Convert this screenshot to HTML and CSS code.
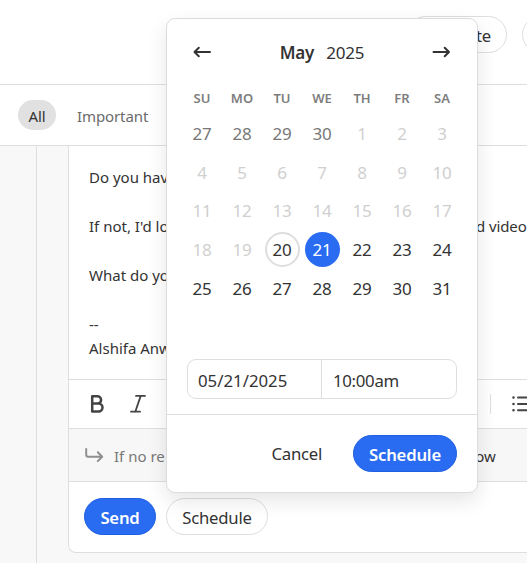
FILE: index.html
```html
<!DOCTYPE html>
<html lang="en">
<head>
  <meta charset="UTF-8">
  <meta name="viewport" content="width=device-width, initial-scale=1.0">
  <title>Schedule</title>
  <link rel="stylesheet" href="styles.css">
</head>
<body>
  <header class="header">
    <button class="btn header-btn">Create</button>
    <button class="btn header-more"></button>
  </header>

  <nav class="tabs">
    <span class="tab tab-active">All</span>
    <span class="tab">Important</span>
  </nav>

  <main class="main">
    <aside class="sidebar"></aside>
    <section class="composer">
      <div class="message">
        <p>Do you have</p>
        <p class="split"><span>If not, I'd lo</span><span>d video</span></p>
        <p>What do yo</p>
        <p class="signature">--<br>Alshifa Anw</p>
      </div>

      <div class="toolbar">
        <svg class="icon-bold" width="16" height="20" viewBox="0 0 16 20">
          <path d="M3.2 2.2h5.2a3.7 3.7 0 0 1 0 7.4H3.2zM3.2 9.6h6.4a3.9 3.9 0 0 1 0 7.8H3.2z"/>
        </svg>
        <svg class="icon-italic" width="16" height="20" viewBox="0 0 16 20">
          <path d="M6 1.9h9M1 17.7h9M10.7 1.9L5.3 17.7"/>
        </svg>
        <span class="toolbar-divider"></span>
        <svg class="icon-list" width="15" height="18" viewBox="0 0 15 18">
          <path d="M6 2.5h14M6 9h14M6 15.3h14"/>
          <path class="dots" d="M1.5 2.5h.01M1.5 9h.01M1.5 15.3h.01"/>
        </svg>
      </div>

      <div class="reminder">
        <svg width="19" height="15" viewBox="0 0 19 15">
          <path d="M1.2 1v5.7a2 2 0 0 0 2 2h14M12.8 4.3l4.4 4.4-4.4 4.4"/>
        </svg>
        <span class="reminder-text">If no re</span>
        <span class="reminder-when">now</span>
      </div>

      <div class="actions">
        <button class="btn btn-primary send">Send</button>
        <button class="btn schedule">Schedule</button>
      </div>
    </section>
  </main>

  <div class="picker">
    <div class="picker-head">
      <svg width="20" height="14" viewBox="0 0 20 14">
        <path d="M18 7H2.5M6.8 2.7L2.5 7l4.3 4.3"/>
      </svg>
      <div class="picker-title"><strong>May</strong><span>2025</span></div>
      <svg width="20" height="14" viewBox="0 0 20 14">
        <path d="M1.5 7H17M12.7 2.7L17 7l-4.3 4.3"/>
      </svg>
    </div>

    <div class="weekdays">
      <span>SU</span><span>MO</span><span>TU</span><span>WE</span><span>TH</span><span>FR</span><span>SA</span>
    </div>

    <div class="days">
      <span class="prev">27</span><span class="prev">28</span><span class="prev">29</span><span class="prev">30</span><span class="off">1</span><span class="off">2</span><span class="off">3</span>
      <span class="off">4</span><span class="off">5</span><span class="off">6</span><span class="off">7</span><span class="off">8</span><span class="off">9</span><span class="off">10</span>
      <span class="off">11</span><span class="off">12</span><span class="off">13</span><span class="off">14</span><span class="off">15</span><span class="off">16</span><span class="off">17</span>
      <span class="off">18</span><span class="off">19</span><span class="today">20</span><span class="selected">21</span><span>22</span><span>23</span><span>24</span>
      <span>25</span><span>26</span><span>27</span><span>28</span><span>29</span><span>30</span><span>31</span>
    </div>

    <div class="fields">
      <div class="field">05/21/2025</div>
      <div class="field">10:00am</div>
    </div>

    <div class="picker-foot">
      <button class="cancel">Cancel</button>
      <button class="btn btn-primary confirm">Schedule</button>
    </div>
  </div>
</body>
</html>
```
FILE: styles.css
```css
* {
  box-sizing: border-box;
}

body {
  margin: 0;
  height: 563px;
  display: flex;
  flex-direction: column;
  position: relative;
  overflow: hidden;
  background: #fff;
  color: #333;
  font-family: "Noto Sans", "Open Sans", sans-serif;
  font-size: 15px;
}

svg {
  flex: none;
  fill: none;
  stroke: #333;
  stroke-width: 2;
  stroke-linecap: round;
  stroke-linejoin: round;
}

button {
  font-family: inherit;
  color: inherit;
  padding: 0;
  border: none;
  background: none;
}

.btn {
  flex: none;
  height: 37px;
  border: 1px solid #dedede;
  border-radius: 19px;
  background: #fff;
  font-size: 16.7px;
  line-height: 37px;
  letter-spacing: -0.2px;
}

.btn-primary {
  background: #296cf2;
  border-color: #1f5fe0;
  color: #fff;
  font-weight: 600;
}

.header {
  height: 85px;
  flex: none;
  display: flex;
  gap: 15px;
  padding: 16px 0 0 407px;
  border-bottom: 1px solid #dedede;
  overflow: hidden;
}

.header-btn {
  width: 100px;
  padding-right: 15px;
  text-align: right;
}

.header-more {
  width: 60px;
}

.tabs {
  height: 61px;
  flex: none;
  display: flex;
  align-items: flex-start;
  gap: 5px;
  padding: 15px 0 0 18px;
  border-bottom: 1px solid #dedede;
}

.tab {
  height: 30px;
  padding: 0 16px;
  line-height: 32px;
  color: #6b6b6b;
  letter-spacing: -0.1px;
}

.tab-active {
  width: 38px;
  padding: 0;
  text-align: center;
  border-radius: 15px;
  background: #e1e1e1;
  color: #333;
}

.main {
  flex: 1;
  display: flex;
  background: #f8f8f8;
}

.sidebar {
  width: 37px;
  flex: none;
  border-right: 1px solid #dedede;
}

.composer {
  flex: 1;
  min-width: 0;
  height: 407px;
  margin-left: 31px;
  display: flex;
  flex-direction: column;
  border: 1px solid #dedede;
  border-width: 0 0 1px 1px;
  border-radius: 0 0 0 8px;
  background: #fff;
}

.message {
  height: 234px;
  flex: none;
  padding: 19px 0 0 20px;
  border-bottom: 1px solid #dedede;
  line-height: 24.4px;
  white-space: nowrap;
}

.message p {
  margin: 0 0 24.5px;
}

.split {
  display: flex;
}

.split span:first-child {
  width: 387px;
}

.split span:last-child {
  letter-spacing: -0.1px;
}

.toolbar {
  height: 49px;
  flex: none;
  display: flex;
  align-items: center;
  padding-left: 20px;
  border-bottom: 1px solid #dedede;
}

.toolbar svg {
  stroke: #444;
}

.toolbar .icon-bold {
  stroke-width: 2.5;
}

.toolbar .icon-italic {
  margin-left: 25px;
  stroke-width: 1.8;
}

.toolbar-divider {
  width: 1px;
  height: 20px;
  margin-left: 344px;
  background: #dedede;
}

.icon-list {
  margin-left: 21px;
}

.icon-list .dots {
  stroke-width: 2.6;
}

.reminder {
  height: 53px;
  flex: none;
  display: flex;
  align-items: center;
  padding: 1px 0 0 16px;
  border-bottom: 1px solid #dedede;
  background: #f7f7f7;
}

.reminder svg {
  stroke: #8f8f8f;
}

.reminder-text {
  width: 352px;
  margin-left: 10px;
  color: #777;
}

.actions {
  display: flex;
  gap: 10px;
  padding: 16px 0 0 15px;
}

.send {
  width: 72px;
}

.schedule {
  width: 102px;
}

/* date picker popup */
.picker {
  position: absolute;
  left: 166px;
  top: 18px;
  width: 312px;
  height: 475px;
  display: flex;
  flex-direction: column;
  border: 1px solid #dcdcdc;
  border-radius: 9px;
  background: #fff;
  box-shadow: 0 8px 20px rgba(0, 0, 0, 0.1);
}

.picker-head {
  display: flex;
  align-items: center;
  justify-content: space-between;
  height: 24px;
  margin: 21px 25px 0;
}

.picker-title {
  display: flex;
  gap: 12px;
  font-size: 17px;
  letter-spacing: -0.2px;
}

.picker-title strong {
  font-weight: 600;
}

.weekdays,
.days {
  display: grid;
  grid-template-columns: repeat(7, 40px);
  justify-items: center;
  margin-left: 15px;
}

.weekdays {
  margin-top: 25px;
  font-size: 13px;
  line-height: 18px;
  font-weight: 600;
  color: #7d7d7d;
}

.days {
  grid-auto-rows: 38.8px;
  align-items: center;
  margin-top: 7px;
  font-size: 17px;
}

.days span {
  width: 35px;
  height: 35px;
  line-height: 35px;
  text-align: center;
  letter-spacing: -0.3px;
}

.days .prev {
  color: #777;
}

.days .off {
  color: #cfcfcf;
}

.days .today {
  line-height: 31px;
  border: 2px solid #dedede;
  border-radius: 50%;
}

.days .selected {
  border-radius: 50%;
  background: #296cf2;
  color: #fff;
}

.fields {
  display: flex;
  height: 40px;
  margin: 51px 20px 0;
  border: 1px solid #dedede;
  border-radius: 9px;
  font-size: 16.8px;
  line-height: 41px;
}

.field {
  width: 133px;
  padding-left: 10px;
}

.field + .field {
  padding-left: 11px;
  border-left: 1px solid #dedede;
  letter-spacing: -0.3px;
}

.picker-foot {
  flex: 1;
  display: flex;
  align-items: flex-start;
  justify-content: flex-end;
  gap: 31px;
  margin-top: 15px;
  padding: 20px 20px 0 0;
  border-top: 1px solid #dedede;
}

.cancel {
  height: 38px;
  font-size: 16.8px;
  letter-spacing: -0.3px;
}

.confirm {
  width: 104px;
}
```
